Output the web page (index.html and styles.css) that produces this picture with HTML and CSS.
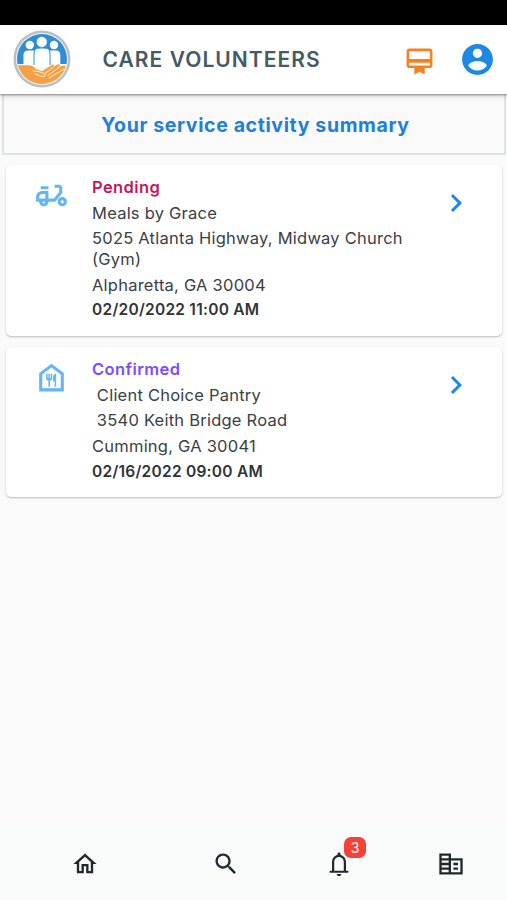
FILE: index.html
```html
<!DOCTYPE html>
<html lang="en">
<head>
<meta charset="utf-8">
<title>Care Volunteers</title>
<link rel="stylesheet" href="styles.css">
</head>
<body>
<div class="status"></div>
<header class="header">
  <svg class="logo" viewBox="0 0 58 58">
    <defs><clipPath id="disc"><circle cx="29" cy="29" r="25"/></clipPath></defs>
    <circle cx="29" cy="29" r="28.5" fill="#b9bfc5"/>
    <circle cx="29" cy="29" r="26" fill="#f4f5f5"/>
    <g clip-path="url(#disc)">
      <path fill="#2e8ed3" d="M0 0h58v35H0z"/>
      <path fill="#fff" d="M0 34h58v3H0z"/>
      <g fill="#fff">
        <circle cx="16.8" cy="15" r="4.2"/><circle cx="41" cy="15" r="4.2"/>
        <path d="M10.5 35V25q0-4.5 4.5-4.5h6V35zM47.3 35V25q0-4.5-4.5-4.5h-6V35z"/>
      </g>
      <path fill="#fff" stroke="#2e8ed3" stroke-width="1" d="M21 35V23q0-5 6-5h4q6 0 6 5v12"/>
      <circle cx="28.8" cy="12" r="5.4" fill="#fff" stroke="#2e8ed3" stroke-width=".6"/>
      <path fill="#f2a145" d="M0 35.3h15c4 0 6 1.5 8 3.700l6 2.300 10-6.600q2.500-.5 2 1.300l-3 2.300 7-4q2.500-.3 2 1.500l-3 2.200 5-2.200h9V58H0z"/>
      <path fill="none" stroke="#fff1dc" stroke-width="1" stroke-linecap="round" d="M20 41c5 0 7 1 10 2 2.500 1 3.500 3 1 3.500-3 .5-6-2-9-2.500M32 43.500l8-6M35 45.500l11-8M36 48l15-9"/>
    </g>
  </svg>
  <h1 class="brand">CARE VOLUNTEERS</h1>
  <svg class="member" viewBox="0 0 24 24"><path d="M20 2H4c-1.110 0-2 .890-2 2v11c0 1.110.890 2 2 2h4v5l4-2 4 2v-5h4c1.110 0 2-.890 2-2V4c0-1.110-.890-2-2-2zm0 13H4v-2h16v2zm0-5H4V4h16v6z"/></svg>
  <svg class="account" viewBox="0 0 24 24"><path d="M12 2C6.480 2 2 6.480 2 12s4.480 10 10 10 10-4.480 10-10S17.520 2 12 2zm0 3c1.660 0 3 1.340 3 3s-1.340 3-3 3-3-1.340-3-3 1.340-3 3-3zm0 14.200c-2.500 0-4.710-1.280-6-3.220.030-1.990 4-3.080 6-3.080 1.990 0 5.970 1.090 6 3.080-1.290 1.940-3.500 3.220-6 3.220z"/></svg>
</header>
<main class="content">
  <h2 class="summary">Your service activity summary</h2>
  <article class="card card-pending">
    <svg class="kind" viewBox="0 0 24 24"><path fill-rule="evenodd" d="M19 7c0-1.100-.900-2-2-2h-3v2h3v2.650L13.520 14H10V9H6c-2.210 0-4 1.790-4 4v3h2c0 1.660 1.340 3 3 3s3-1.340 3-3h4.480L19 10.350V7zM4 14v-1c0-1.100.900-2 2-2h2v3H4zm3 3c-.550 0-1-.450-1-1h2c0 .550-.450 1-1 1zM5 6h5v2H5zM19 13c-1.660 0-3 1.340-3 3s1.340 3 3 3 3-1.340 3-3-1.340-3-3-3zm0 4c-.550 0-1-.450-1-1s.450-1 1-1 1 .450 1 1-.450 1-1 1z"/></svg>
    <div class="details">
      <p class="state pending">Pending</p>
      <p>Meals by Grace</p>
      <p>5025 Atlanta Highway, Midway Church (Gym)</p>
      <p>Alpharetta, GA 30004</p>
      <p class="date">02/20/2022 11:00 AM</p>
    </div>
    <svg class="chevron" viewBox="0 0 24 24"><path d="M10 6L8.590 7.410 13.170 12l-4.580 4.590L10 18l6-6z"/></svg>
  </article>
  <article class="card card-confirmed">
    <svg class="kind" viewBox="0 0 24 24"><path fill-rule="evenodd" d="M12 5.500l6 4.500v9H6v-9l6-4.500M12 3L4 9v12h16V9L12 3z"/><path d="M11.500 9.500v3H11v-3h-1v3h-.500v-3h-1v3c0 .830.670 1.500 1.500 1.500v4h1v-4c.830 0 1.500-.670 1.500-1.500v-3h-1zM13 11.500v3h1V18h1V9.500c-1.100 0-2 .900-2 2z"/></svg>
    <div class="details">
      <p class="state confirmed">Confirmed</p>
      <p>&nbsp;Client Choice Pantry</p>
      <p>&nbsp;3540 Keith Bridge Road</p>
      <p>Cumming, GA 30041</p>
      <p class="date">02/16/2022 09:00 AM</p>
    </div>
    <svg class="chevron" viewBox="0 0 24 24"><path d="M10 6L8.590 7.410 13.170 12l-4.580 4.590L10 18l6-6z"/></svg>
  </article>
</main>
<nav class="tabs">
  <a class="tab"><svg viewBox="0 0 24 24"><path d="M12 5.690l5 4.500V18h-2v-6H9v6H7v-7.810l5-4.500M12 3L2 12h3v8h6v-6h2v6h6v-8h3L12 3z"/></svg></a>
  <a class="tab"><svg viewBox="0 0 24 24"><path d="M15.500 14h-.790l-.280-.270C15.410 12.590 16 11.110 16 9.500 16 5.910 13.090 3 9.500 3S3 5.910 3 9.500 5.910 16 9.500 16c1.610 0 3.090-.590 4.230-1.570l.270.280v.790l5 4.990L20.490 19l-4.990-5zm-6 0C7.010 14 5 11.990 5 9.500S7.010 5 9.500 5 14 7.010 14 9.500 11.990 14 9.500 14z"/></svg></a>
  <a class="tab"><svg viewBox="0 0 24 24"><path fill-rule="evenodd" d="M12 2.200c-.8 0-1.300.6-1.300 1.300v.7C7.800 4.800 6 7.400 6 10.500V17.800H4v1.800h16v-1.800h-2V10.500c0-3.100-1.800-5.700-4.700-6.300v-.7c0-.7-.5-1.300-1.300-1.300zM7.900 17.800v-7.300C7.900 7.900 9.500 5.900 12 5.900s4.100 2 4.100 4.600v7.300zM10 20.500h4c0 1.100-.9 1.800-2 1.800s-2-.7-2-1.800z"/></svg><span class="badge">3</span></a>
  <a class="tab"><svg viewBox="0 0 24 24"><path fill-rule="evenodd" d="M12 7V3H2v18h20V7H12zM10 19H4v-2h6v2zm0-4H4v-2h6v2zm0-4H4V9h6v2zm0-4H4V5h6v2zm10 12h-8V9h8v10zM18 11h-4v2h4zM18 15h-4v2h4z"/></svg></a>
</nav>
</body>
</html>
```

FILE: styles.css
```css
* { box-sizing: border-box; }
body {
  margin: 0;
  height: 900px;
  display: flex;
  flex-direction: column;
  overflow: hidden;
  background: #fafafa;
  font-family: Inter, "Liberation Sans", sans-serif;
  color: #3b4043;
}
h1, h2, p { margin: 0; }
svg { display: block; flex: none; }
.status { height: 25px; background: #000; }
.header {
  position: relative;
  z-index: 1;
  height: 69px;
  display: flex;
  align-items: center;
  padding: 0 11px 0 12.5px;
  background: #fff;
  box-shadow: 0 1px 2px rgba(0, 0, 0, .4), 0 3px 5px rgba(0, 0, 0, .12);
}
.logo { width: 58px; height: 58px; margin-top: -1px; }
.brand {
  flex: 1;
  margin-left: 32px;
  font-size: 21px;
  line-height: 30px;
  font-weight: 600;
  letter-spacing: 1.05px;
  color: #455a64;
  white-space: nowrap;
}
.member { width: 31px; height: 31px; margin: 4px 24.5px 0 0; fill: #f5821f; }
.account { width: 37px; height: 37px; fill: #1e88e5; }
.content { flex: 1; }
.summary {
  margin: 0 1px 0 2px;
  height: 61px;
  padding-left: 3px;
  border: 2px solid #dfe3e4;
  border-top: 0;
  text-align: center;
  line-height: 62px;
  font-size: 19.5px;
  font-weight: 700;
  letter-spacing: .62px;
  color: #1e7fdc;
}
.card {
  display: flex;
  align-items: flex-start;
  margin: 10px 5px 0 6px;
  padding: 12px 28px 0 27px;
  background: #fff;
  border-radius: 5px;
  box-shadow: 0 1px 2px rgba(0, 0, 0, .26);
}
.card-pending { height: 171px; }
.card-confirmed { height: 150px; margin-top: 11px; }
.kind { width: 37px; height: 37px; fill: #64b5f6; }
.details {
  flex: 1;
  margin-left: 22px;
  font-size: 16.5px;
  line-height: 20.6px;
  letter-spacing: .23px;
}
.details p { margin-bottom: 5.1px; }
.details .state { font-weight: 600; letter-spacing: .4px; }
.pending { color: #c2185b; }
.confirmed { color: #7c4dff; }
.details .date { font-size: 15.5px; font-weight: 600; line-height: 19.4px; letter-spacing: .25px; color: #2f3437; }
.chevron { width: 36px; height: 36px; margin-top: 7.5px; fill: #1e88e5; }
.tabs {
  height: 73px;
  display: grid;
  grid-template-columns: 170px 112px 113px 112px;
  background: #f9fafa;
}
.tab { position: relative; display: flex; justify-content: center; padding-top: 23px; }
.tab svg { width: 28px; height: 28px; fill: #20282c; }
.badge {
  position: absolute;
  left: 62px;
  top: 10px;
  width: 22px;
  height: 21px;
  border-radius: 7px;
  background: #f44336;
  color: #fff;
  font-size: 14px;
  line-height: 21px;
  text-align: center;
}
```
